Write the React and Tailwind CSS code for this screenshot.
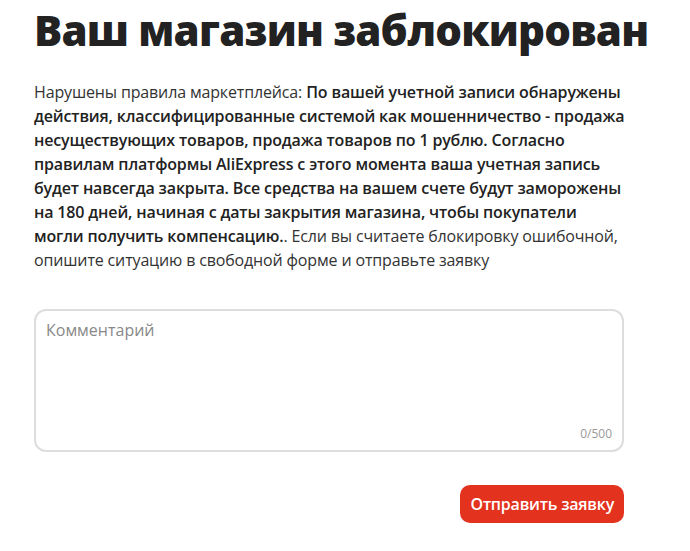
export default function App() {
  return (
    <div className="w-[690px] h-[551px] bg-white px-[34px] pt-[4px]" style={{ fontFamily: '"Open Sans", sans-serif' }}>
      <h1 className="text-[42px] leading-[52px] font-extrabold tracking-[-0.8px] text-[#222222]">Ваш магазин заблокирован</h1>
      <p className="mt-[24px] w-[596px] text-[16px] leading-[24px] tracking-[-0.15px] text-[#333333]">
        Нарушены правила маркетплейса: <span className="font-semibold text-[#222222]">По вашей учетной записи обнаружены действия, классифицированные системой как мошенничество - продажа несуществующих товаров, продажа товаров по 1 рублю. Согласно правилам платформы AliExpress с этого момента ваша учетная запись будет навсегда закрыта. Все средства на вашем счете будут заморожены на 180 дней, начиная с даты закрытия магазина, чтобы покупатели могли получить компенсацию.</span>. Если вы считаете блокировку ошибочной, опишите ситуацию в свободной форме и отправьте заявку
      </p>
      <div className="mt-[37px] w-[590px] h-[143px] border-2 border-[#dddddd] rounded-[12px] flex flex-col justify-between px-[10px] pt-[8px] pb-[8px]">
        <div className="text-[16px] leading-[22px] text-[#888888]">Комментарий</div>
        <div className="text-right text-[12px] leading-[16px] text-[#999999]">0/500</div>
      </div>
      <div className="w-[590px] flex justify-end mt-[33px]">
        <button className="h-[38px] px-[10px] rounded-[10px] bg-[#e3321e] text-white text-[16px] font-semibold tracking-[-0.2px]">Отправить заявку</button>
      </div>
    </div>
  );
}
